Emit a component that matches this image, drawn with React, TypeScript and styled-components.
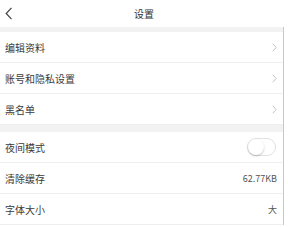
import React from "react"
import styled, { createGlobalStyle } from "styled-components"

const GlobalStyle = createGlobalStyle`
  html, body {
    margin: 0;
    padding: 0;
    background: #ffffff;
  }
  body {
    font-family: "Noto Sans CJK SC", "Noto Sans", sans-serif;
    color: #333333;
  }
`

const Page = styled.div`
  width: 288px;
  height: 227px;
  overflow: hidden;
  background: #fff;
`

const Header = styled.header`
  position: relative;
  height: 27px;
  display: flex;
  align-items: center;
  justify-content: center;
  font-size: 10px;
  color: #333;
`

const Back = styled.div`
  position: absolute;
  left: 5px;
  top: 7px;
  width: 8px;
  height: 13px;
  display: flex;
`

const Body = styled.div`
  width: 283px;
  border-right: 1px solid #c9c9c9;
`

const Gap = styled.div<{ $h: number }>`
  height: ${(p) => p.$h}px;
  background: #f2f2f2;
`

const Row = styled.div`
  height: 30px;
  display: flex;
  align-items: center;
  justify-content: space-between;
  padding: 0 6px 0 5px;
  border-bottom: 1px solid #efefef;
  font-size: 10px;
  color: #3a3a3a;
  &:last-child {
    border-bottom: 1px solid #efefef;
  }
`

const Value = styled.span`
  font-size: 9px;
  color: #555;
`

const Toggle = styled.div`
  width: 27px;
  height: 16px;
  margin-right: 1px;
  border: 1px solid #e2e2e2;
  border-radius: 9px;
  position: relative;
  background: #fff;
`

const Knob = styled.div`
  position: absolute;
  left: 0;
  top: 0;
  width: 16px;
  height: 16px;
  border-radius: 50%;
  background: #fff;
  box-shadow: 0 1px 2px rgba(0, 0, 0, 0.25);
`

const Chevron = () => (
  <svg width="5" height="9" viewBox="0 0 5 9">
    <path d="M0.7 0.7 L4.2 4.5 L0.7 8.3" fill="none" stroke="#c4c4c4" strokeWidth="1" />
  </svg>
)

const groups = [
  ["编辑资料", "账号和隐私设置", "黑名单"],
]

export default function App() {
  return (
    <Page>
      <GlobalStyle />
      <Header>
        <Back>
          <svg width="8" height="13" viewBox="0 0 8 13">
            <path d="M6.5 0.8 L1.2 6.5 L6.5 12.2" fill="none" stroke="#444" strokeWidth="1.2" />
          </svg>
        </Back>
        设置
      </Header>
      <Body>
        <Gap $h={5} />
        {groups[0].map((label) => (
          <Row key={label}>
            {label}
            <Chevron />
          </Row>
        ))}
        <Gap $h={7} />
        <Row>
          夜间模式
          <Toggle>
            <Knob />
          </Toggle>
        </Row>
        <Row>
          清除缓存
          <Value>62.77KB</Value>
        </Row>
        <Row>
          字体大小
          <Value>大</Value>
        </Row>
      </Body>
    </Page>
  )
}
